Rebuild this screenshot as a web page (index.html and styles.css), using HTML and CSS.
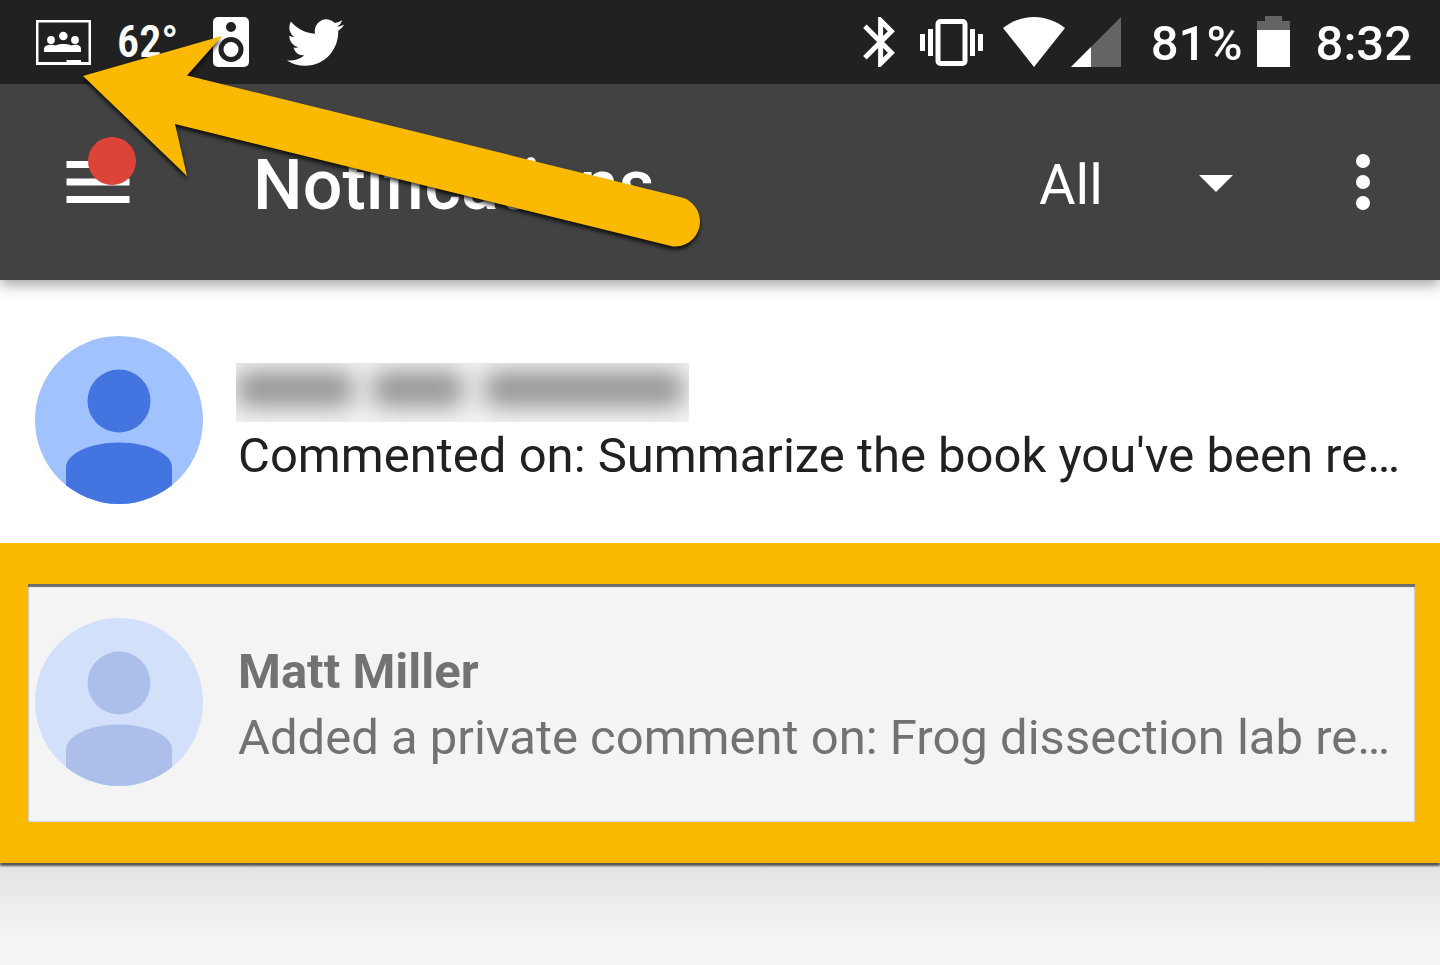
FILE: index.html
```html
<!DOCTYPE html>
<html lang="en">
<head>
<meta charset="utf-8">
<meta name="viewport" content="width=device-width, initial-scale=1">
<title>Notifications</title>
<link rel="stylesheet" href="styles.css">
</head>
<body>
<div class="status-bar">
  <div class="status-left">
    <svg class="ic-class" width="55" height="45" viewBox="0 0 55 45" fill="#fff" aria-hidden="true">
      <path fill-rule="evenodd" d="M0 0h55v45H0zM2.500 2.500v39.500H30.500v-2H45v2h7.500v-39.500z"/>
      <circle cx="27.300" cy="16" r="4.300"/><circle cx="15" cy="20" r="3.900"/><circle cx="39" cy="20" r="3.900"/>
      <path d="M8 32v-3c0-3 4-4.300 7-4.300 2 0 3 .2 4.500.7C22 24.400 25 24 27.300 24s5.500.4 8 1.400c1.200-.5 2.500-.7 4.200-.7 3 0 5.500 1.300 5.500 4.300v3z"/>
    </svg>
    <span class="temperature">62°</span>
    <svg class="ic-speaker" width="36" height="50" viewBox="0 0 36 50" aria-hidden="true">
      <rect width="36" height="50" rx="5" fill="#fff"/>
      <circle cx="18" cy="10" r="5" fill="#212121"/><circle cx="18" cy="32.500" r="12.500" fill="#212121"/><circle cx="18" cy="32.500" r="7.500" fill="#fff"/>
    </svg>
    <svg class="ic-bird" width="57" height="57" viewBox="0 0 24 24" fill="#fff" aria-hidden="true"><path d="M23.953 4.570a10 10 0 01-2.825.775 4.958 4.958 0 002.163-2.723c-.951.555-2.005.959-3.127 1.184a4.920 4.920 0 00-8.384 4.482C7.690 8.095 4.067 6.130 1.640 3.162a4.822 4.822 0 00-.666 2.475c0 1.710.87 3.213 2.188 4.096a4.904 4.904 0 01-2.228-.616v.06a4.923 4.923 0 003.946 4.827 4.996 4.996 0 01-2.212.085 4.936 4.936 0 004.604 3.417 9.867 9.867 0 01-6.102 2.105c-.39 0-.779-.023-1.170-.067a13.995 13.995 0 007.557 2.209c9.053 0 13.998-7.496 13.998-13.985 0-.21 0-.42-.015-.63A9.935 9.935 0 0024 4.590z"/></svg>
  </div>
  <div class="status-right">
    <svg class="ic-bt" width="32" height="50" viewBox="5 2 12.710 20" fill="#fff" aria-hidden="true"><path d="M17.710 7.710L12 2h-1v7.590L6.410 5 5 6.410 10.590 12 5 17.590 6.410 19 11 14.410V22h1l5.710-5.710-4.300-4.290 4.300-4.290zM13 5.830l1.880 1.880L13 9.590V5.830zm1.880 10.460L13 18.170v-3.760l1.880 1.880z"/></svg>
    <svg class="ic-vibrate" width="63" height="50" viewBox="0 0 63 50" fill="#fff" aria-hidden="true">
      <rect x="18" y="4.500" width="27" height="42" rx="2.500" fill="none" stroke="#fff" stroke-width="5"/>
      <path d="M0 17h5v17H0zM8 12h5v27H8zM50 12h5v27h-5zM58 17h5v17h-5z"/>
    </svg>
    <svg class="ic-wifi" width="62" height="50" viewBox="0 0 62 50" fill="#fff" aria-hidden="true"><path d="M31 50 0 11C9 4 19.500 0 31 0s22 4 31 11z"/></svg>
    <svg class="ic-signal" width="50" height="50" viewBox="0 0 50 50" aria-hidden="true"><path d="M50 0v50H0z" fill="#646464"/><path d="M20 30v20H0z" fill="#fff"/></svg>
    <span class="status-text">81%</span>
    <svg class="ic-battery" width="33" height="52" viewBox="0 0 33 52" aria-hidden="true"><path d="M8 0h17v5h8v10H0V5h8z" fill="#646464"/><path d="M0 14h33v37H0z" fill="#fff"/></svg>
    <span class="status-text">8:32</span>
  </div>
</div>

<header class="app-bar">
  <button class="nav-button" type="button" aria-label="Open navigation">
    <svg width="70" height="70" viewBox="0 0 70 70" aria-hidden="true"><path d="M0.500 25H63.500v7H0.500zM0.500 42.500H63.500v7H0.500zM0.500 60H63.500v7H0.500z" fill="#fff"/><circle cx="46" cy="25" r="24" fill="#db4437"/></svg>
  </button>
  <h1 class="title">Notifications</h1>
  <div class="filter">
    <select aria-label="Filter notifications"><option>All</option></select>
    <svg width="34" height="17" viewBox="0 0 34 17" fill="#fff" aria-hidden="true"><path d="M0 0h34L17 17z"/></svg>
  </div>
  <button class="more-button" type="button" aria-label="More options">
    <svg width="14" height="56" viewBox="0 0 14 56" fill="#fff" aria-hidden="true"><circle cx="7" cy="7" r="7"/><circle cx="7" cy="28" r="7"/><circle cx="7" cy="49" r="7"/></svg>
  </button>
</header>

<main class="list">
  <article class="item">
    <svg class="avatar" width="168" height="168" viewBox="0 0 168 168" aria-hidden="true">
      <defs><clipPath id="disc"><circle cx="84" cy="84" r="84"/></clipPath></defs>
      <g clip-path="url(#disc)"><path fill="#a0c2ff" d="M0 0h168v168H0z"/><g fill="#4374e0"><circle cx="84" cy="65" r="31.500"/><path d="M31 168v-37c0-12 22-24.500 53-24.500s53 12.500 53 24.500v37z"/></g></g>
    </svg>
    <div class="item-body">
      <div class="hidden-name" role="img" aria-label="Hidden name">
        <span class="smudge smudge-1"></span><span class="smudge smudge-2"></span><span class="smudge smudge-3"></span>
      </div>
      <p class="detail">Commented on: Summarize the book you've been re…</p>
    </div>
  </article>
  <article class="item item-marked">
    <svg class="avatar" width="168" height="168" viewBox="0 0 168 168" aria-hidden="true">
      <g clip-path="url(#disc)"><path fill="#d2e0fa" d="M0 0h168v168H0z"/><g fill="#acbfeb"><circle cx="84" cy="65" r="31.500"/><path d="M31 168v-37c0-12 22-24.500 53-24.500s53 12.500 53 24.500v37z"/></g></g>
    </svg>
    <div class="item-body">
      <h2 class="name">Matt Miller</h2>
      <p class="detail">Added a private comment on: Frog dissection lab re…</p>
    </div>
  </article>
</main>
<div class="list-end"></div>

<svg class="arrow" width="720" height="270" viewBox="0 0 720 270" aria-hidden="true">
  <path fill="#fcb902" d="M83 76 222 36 187 75.500 683 197.800A25 25 0 0 1 672 246.300L175 124 187 176z"/>
</svg>
</body>
</html>
```
FILE: styles.css
```css
* {
  box-sizing: border-box;
}

body {
  display: flex;
  flex-direction: column;
  min-height: 100vh;
  margin: 0;
  position: relative;
  overflow-x: hidden;
  background: #f4f4f4;
  font-family: Roboto, "Liberation Sans", sans-serif;
  color: #212121;
}

h1, h2, p {
  margin: 0;
}

svg {
  display: block;
  flex: none;
}

button, select {
  border: 0;
  padding: 0;
  background: none;
  color: inherit;
  font: inherit;
}

.status-bar {
  display: flex;
  justify-content: space-between;
  align-items: center;
  height: 84px;
  padding: 0 28px 0 36px;
  position: relative;
  z-index: 2;
  background: #212121;
  color: #fff;
}

.status-left, .status-right {
  display: flex;
  align-items: center;
}

.temperature {
  width: 96px;
  margin-left: 26px;
  font: 600 44px/84px "Roboto Condensed", "Liberation Sans Narrow", Roboto, sans-serif;
}

.ic-bird {
  margin-left: 38px;
}

.ic-vibrate {
  margin-left: 25px;
}

.ic-wifi {
  margin-left: 20px;
}

.ic-signal {
  margin: 0 30px 0 6px;
}

.ic-battery {
  margin: 0 26px 0 14px;
}

.status-text {
  padding-top: 4px;
  font-size: 49px;
  font-weight: 500;
  line-height: 56px;
}

.app-bar {
  position: relative;
  z-index: 1;
  display: flex;
  align-items: center;
  height: 196px;
  padding: 0 70px 0 66px;
  background: #424242;
  color: #fff;
  box-shadow: 0 4px 14px rgba(0, 0, 0, 0.4);
}

.nav-button {
  width: 187px;
  padding-bottom: 22px;
}

.title {
  flex: 1;
  padding-top: 6px;
  font-size: 70px;
  font-weight: 500;
  line-height: 84px;
}

.filter {
  display: grid;
  align-items: center;
  width: 194px;
  margin-right: 123px;
}

.filter select,
.filter svg {
  grid-area: 1 / 1;
}

.filter select {
  appearance: none;
  width: 100%;
  padding-top: 6px;
  font-size: 56px;
  line-height: 66px;
}

.filter option {
  color: #212121;
}

.filter svg {
  justify-self: end;
  margin-top: 2px;
  pointer-events: none;
}

.list {
  position: relative;
}

.item {
  display: flex;
  gap: 35px;
  padding: 56px 35px 39px;
  background: #fff;
}

.item-body {
  flex: 1;
  min-width: 0;
  padding-top: 21px;
}

.name, .detail {
  overflow: hidden;
  font-size: 49px;
  line-height: 66px;
  white-space: nowrap;
}

.name {
  font-weight: 700;
}

.item-marked {
  padding: 34px 7px 36px;
  border: solid #fcb902;
  border-width: 41px 25px 41px 28px;
  background: #f4f4f4;
  color: #727272;
  box-shadow: inset 0 3px 1px #6c6c6c, inset 0 0 2px #999, 0 3px 2px #555;
}

.hidden-name {
  position: relative;
  width: 453px;
  height: 59px;
  margin: 6px 0 1px -2px;
  overflow: hidden;
  background: #f4f4f4;
}

.smudge {
  position: absolute;
  top: 8px;
  height: 36px;
  border-radius: 12px;
  background: #949494;
  filter: blur(12px);
}

.smudge-1 {
  left: 0;
  width: 118px;
}

.smudge-2 {
  left: 136px;
  width: 92px;
}

.smudge-3 {
  left: 248px;
  width: 200px;
}

.list-end {
  flex: 1;
  min-height: 80px;
  background: linear-gradient(#e2e2e2, #f4f4f4 72px);
}

.arrow {
  position: absolute;
  top: 0;
  left: 0;
  z-index: 3;
  pointer-events: none;
  filter: drop-shadow(0 3px 2px rgba(0, 0, 0, 0.8));
}
```
